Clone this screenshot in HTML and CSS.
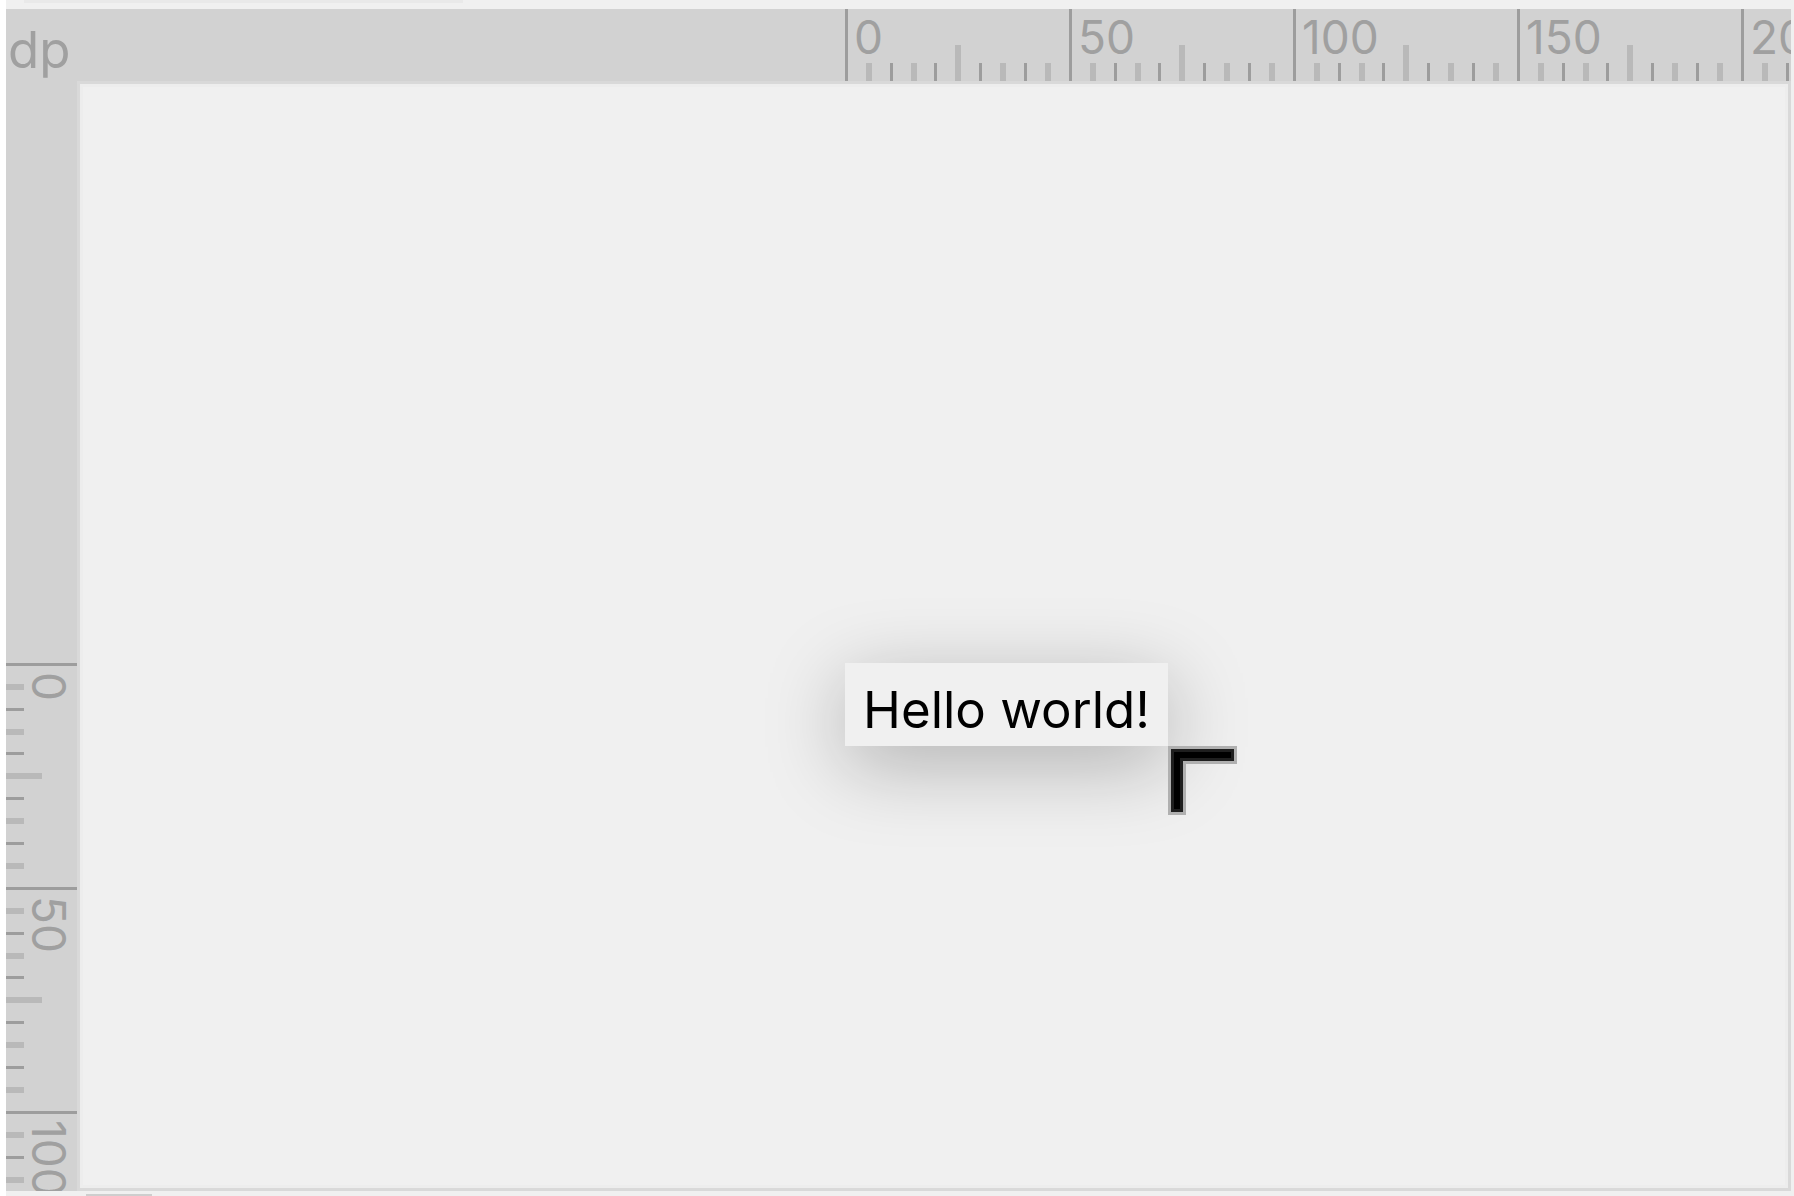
FILE: index.html
```html
<!DOCTYPE html>
<html lang="en">
<head>
  <meta charset="UTF-8">
  <meta name="viewport" content="width=device-width, initial-scale=1.0">
  <title>Preview</title>
  <link rel="stylesheet" href="styles.css">
</head>
<body>
  <!-- one ruler step = 50dp, shared by both rulers -->
  <svg class="defs" width="0" height="0" aria-hidden="true">
    <symbol id="ticks" viewBox="0 0 224 72">
      <path fill="#9d9d9d" d="M0 0h3v72h-3z M45 54h3v18h-3z M89 54h3v18h-3z M134 54h3v18h-3z M179 54h3v18h-3z"/>
      <path fill="#b9b9b9" d="M21 54h6v18h-6z M66 54h6v18h-6z M110 36h6v36h-6z M155 54h6v18h-6z M200 54h6v18h-6z"/>
    </symbol>
    <symbol id="ticks-v" viewBox="0 0 71 224">
      <use href="#ticks" width="224" height="72" transform="translate(72 0) rotate(90)"/>
    </symbol>
  </svg>

  <div class="top-bar"><div class="tab"></div></div>

  <main class="editor">
    <div class="unit">dp</div>
    <div class="ruler ruler-x">
      <div class="step"><svg><use href="#ticks"/></svg><span>0</span></div>
      <div class="step"><svg><use href="#ticks"/></svg><span>50</span></div>
      <div class="step"><svg><use href="#ticks"/></svg><span>100</span></div>
      <div class="step"><svg><use href="#ticks"/></svg><span>150</span></div>
      <div class="step"><svg><use href="#ticks"/></svg><span>200</span></div>
    </div>
    <div class="ruler ruler-y">
      <div class="step"><svg><use href="#ticks-v"/></svg><span>0</span></div>
      <div class="step"><svg><use href="#ticks-v"/></svg><span>50</span></div>
      <div class="step"><svg><use href="#ticks-v"/></svg><span>100</span></div>
    </div>
    <div class="canvas">
      <div class="preview">
        Hello world!
        <svg class="handle" viewBox="0 0 70 70" aria-hidden="true">
          <path fill="#b0b0b0" d="M0 0h69v18H18v51H0z"/>
          <path fill="#1f1f1f" d="M3 3h63v12H15v51H3z"/>
          <path fill="#000" d="M6 6h57v6H12v51H6z"/>
        </svg>
      </div>
    </div>
  </main>

  <div class="bottom-bar"><div class="tab"></div></div>
</body>
</html>
```
FILE: styles.css
```css
:root {
  --bg: #f0f0f0;
  --ruler: #d2d2d2;
  --edge: #d9d9d9;
  --label: #a0a0a0;
  --origin-x: 765px;
  --origin-y: 579px;
}
* { box-sizing: border-box; }
body {
  margin: 0;
  height: 100vh;
  display: flex;
  flex-direction: column;
  overflow: hidden;
  background: var(--bg);
  border-left: 6px solid #fff;
  font-family: Inter, Roboto, sans-serif;
}
.defs { position: absolute; }

.top-bar { height: 9px; padding-left: 18px; }
.top-bar .tab {
  width: 439px;
  height: 3px;
  background: #e9e9e9;
}
.bottom-bar { height: 5px; padding: 3px 0 0 80px; }
.bottom-bar .tab {
  width: 66px;
  height: 2px;
  background: #cecece;
}

.editor {
  flex: 1;
  min-height: 0;
  margin-right: 3px;
  display: grid;
  grid-template-columns: 71px minmax(0, 1fr);
  grid-template-rows: 72px minmax(0, 1fr);
  background: var(--ruler);
}
.unit {
  padding-left: 2px;
  font-size: 51px;
  line-height: 82px;
  color: var(--label);
}

.ruler {
  display: flex;
  overflow: hidden;
  font-size: 46px;
  color: var(--label);
}
.ruler-x { padding-left: calc(var(--origin-x) + 3px); }
.ruler-y {
  flex-direction: column;
  padding-top: calc(var(--origin-y) + 3px);
}
/* ticks and label share one cell */
.step {
  flex: none;
  display: grid;
}
.step svg, .step span { grid-area: 1 / 1; }
.step span { line-height: 56px; }
.ruler-x svg { width: 224px; height: 72px; }
.ruler-x span { padding-left: 9px; }
.ruler-y svg { width: 71px; height: 224px; }
.ruler-y span {
  writing-mode: vertical-rl;
  justify-self: end;
  padding-top: 9px;
}

.canvas {
  padding: var(--origin-y) 0 0 var(--origin-x);
  background: var(--bg);
  border: 3px solid var(--edge);
  box-shadow: inset 0 0 0 3px #ededed;
  overflow: hidden;
}
.preview {
  position: relative;
  width: max-content;
  padding: 14px 18px 3px;
  background: var(--bg);
  box-shadow: 0 18px 80px rgba(0, 0, 0, 0.27);
  font-size: 51px;
  line-height: 66px;
  color: #000;
}
/* resize handle hangs off the bottom right corner */
.handle {
  position: absolute;
  left: 100%;
  top: 100%;
  width: 70px;
  height: 70px;
}
```
